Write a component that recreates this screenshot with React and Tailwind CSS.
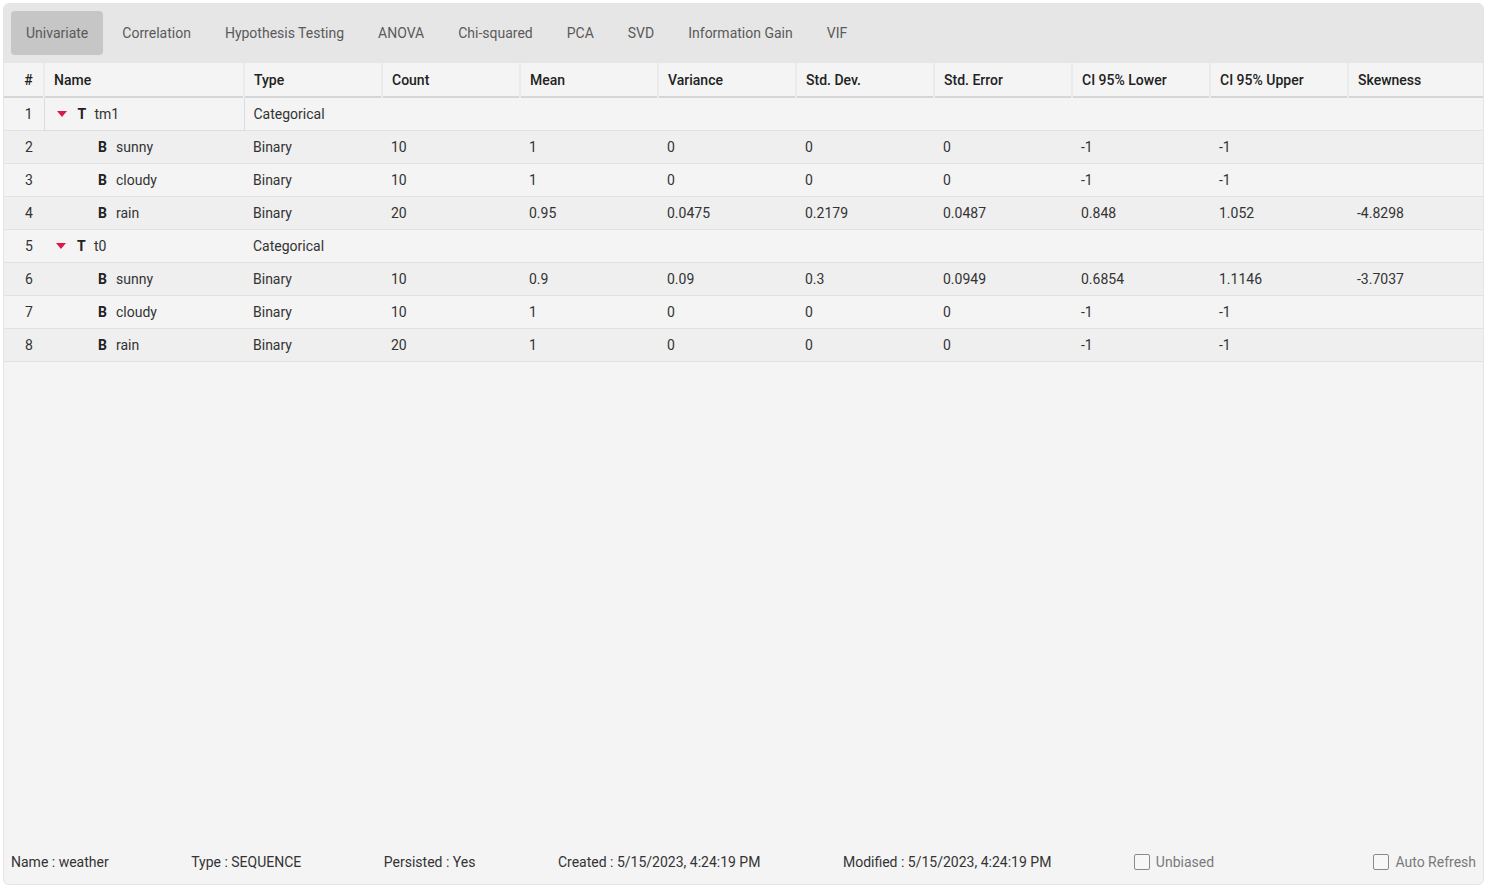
import { useState } from 'react';

const tabs = ['Univariate', 'Correlation', 'Hypothesis Testing', 'ANOVA', 'Chi-squared', 'PCA', 'SVD', 'Information Gain', 'VIF'];

const columns = ['Type', 'Count', 'Mean', 'Variance', 'Std. Dev.', 'Std. Error', 'CI 95% Lower', 'CI 95% Upper', 'Skewness'];

const rows = [
  { id: 1, group: true, tag: 'T', name: 'tm1', values: ['Categorical', '', '', '', '', '', '', '', ''] },
  { id: 2, tag: 'B', name: 'sunny', values: ['Binary', '10', '1', '0', '0', '0', '-1', '-1', ''] },
  { id: 3, tag: 'B', name: 'cloudy', values: ['Binary', '10', '1', '0', '0', '0', '-1', '-1', ''] },
  { id: 4, tag: 'B', name: 'rain', values: ['Binary', '20', '0.95', '0.0475', '0.2179', '0.0487', '0.848', '1.052', '-4.8298'] },
  { id: 5, group: true, tag: 'T', name: 't0', values: ['Categorical', '', '', '', '', '', '', '', ''] },
  { id: 6, tag: 'B', name: 'sunny', values: ['Binary', '10', '0.9', '0.09', '0.3', '0.0949', '0.6854', '1.1146', '-3.7037'] },
  { id: 7, tag: 'B', name: 'cloudy', values: ['Binary', '10', '1', '0', '0', '0', '-1', '-1', ''] },
  { id: 8, tag: 'B', name: 'rain', values: ['Binary', '20', '1', '0', '0', '0', '-1', '-1', ''] },
];

function Caret() {
  return (
    <svg width="10" height="6" viewBox="0 0 10 6" className="shrink-0">
      <path d="M0 0 L10 0 L5 6 Z" fill="#e0174a" />
    </svg>
  );
}

function Checkbox({ label }) {
  const [checked, setChecked] = useState(false);
  return (
    <label className="flex items-center gap-[6px] cursor-pointer" onClick={() => setChecked(!checked)}>
      <span className="w-4 h-4 rounded-[2px] border-[1.5px] border-[#8a8a8a] bg-[#f7f7f7]" />
      <span className="text-[#7a7a7a]">{label}</span>
    </label>
  );
}

export default function App() {
  const [activeTab, setActiveTab] = useState('Univariate');

  return (
    <div className="w-[1487px] h-[888px] bg-white p-[3px] font-['Roboto',sans-serif] text-sm text-[#333]">
      <div className="h-full flex flex-col bg-[#f4f4f4] rounded-[6px] border border-[#e4e4e4] overflow-hidden">
        {/* tabs */}
        <div className="flex items-center gap-[4px] bg-[#e6e6e6] px-[7px] pt-[7px] pb-[8px]">
          {tabs.map((t) => (
            <button
              key={t}
              onClick={() => setActiveTab(t)}
              className={`h-[44px] px-[15px] rounded-[4px] text-[#5a5a5a] ${activeTab === t ? 'bg-[#c6c6c6]' : ''}`}
            >
              {t}
            </button>
          ))}
        </div>

        {/* table */}
        <table className="table-fixed border-collapse w-full">
          <colgroup>
            <col className="w-[40px]" />
            <col className="w-[200px]" />
            {columns.map((c, i) => (
              <col key={c} className={i === columns.length - 1 ? '' : 'w-[138px]'} />
            ))}
          </colgroup>
          <thead>
            <tr className="h-[34px] border-b-2 border-[#d6d6d6] text-[#222]">
              <th className="font-medium pl-[10px] text-center">#</th>
              <th className="font-medium text-left px-[9px] border-l-2 border-[#ebebeb]">Name</th>
              {columns.map((c) => (
                <th key={c} className="font-medium text-left px-[9px] border-l-2 border-[#ebebeb]">{c}</th>
              ))}
            </tr>
          </thead>
          <tbody>
            {rows.map((r) => (
              <tr key={r.id} className={`h-[33px] border-b border-[#e2e2e2] ${r.id % 2 === 0 ? 'bg-[#efefef]' : 'bg-[#f4f4f4]'}`}>
                <td className="pl-[10px] text-center">{r.id}</td>
                <td className={`px-[9px] ${r.id === 1 ? 'border border-[#dcdcdc]' : ''}`}>
                  {r.group ? (
                    <div className="flex items-center">
                      <span className="ml-[3px] w-[21px]"><Caret /></span>
                      <span className="font-bold text-[#222] w-[17px]">{r.tag}</span>
                      <span>{r.name}</span>
                    </div>
                  ) : (
                    <div className="flex items-center pl-[45px]">
                      <span className="font-bold text-[#222] w-[18px]">{r.tag}</span>
                      <span>{r.name}</span>
                    </div>
                  )}
                </td>
                {r.values.map((v, i) => (
                  <td key={i} className="px-[9px]">{v}</td>
                ))}
              </tr>
            ))}
          </tbody>
        </table>

        <div className="flex-1" />

        {/* footer */}
        <div className="flex items-center h-[44px] px-[7px] gap-[82.5px]">
          <span>Name : weather</span>
          <span>Type : SEQUENCE</span>
          <span>Persisted : Yes</span>
          <span>Created : 5/15/2023, 4:24:19 PM</span>
          <span>Modified : 5/15/2023, 4:24:19 PM</span>
          <Checkbox label="Unbiased" />
          <div className="ml-auto">
            <Checkbox label="Auto Refresh" />
          </div>
        </div>
      </div>
    </div>
  );
}
